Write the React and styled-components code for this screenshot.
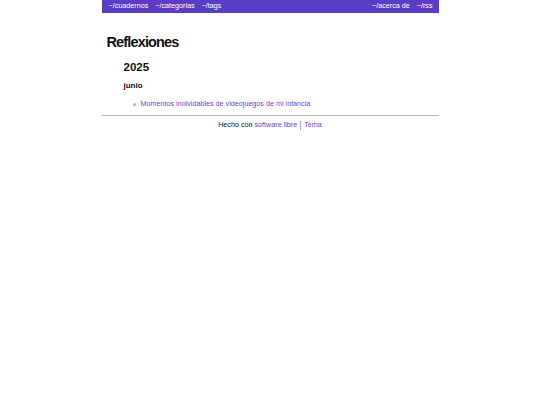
import React from 'react';
import styled, { createGlobalStyle } from 'styled-components';

const GlobalStyle = createGlobalStyle`
  html, body {
    margin: 0;
    padding: 0;
    background: #ffffff;
    font-family: 'Liberation Sans', Arial, sans-serif;
    color: #111111;
  }
`;

const Page = styled.div`
  width: 337px;
  margin: 0 auto;
`;

const NavBar = styled.nav`
  display: flex;
  justify-content: space-between;
  align-items: center;
  height: 12.5px;
  padding: 0 6px 0 7px;
  background: #5b3cc4;
`;

const NavGroup = styled.div`
  display: flex;
  gap: 7px;
`;

const NavLink = styled.a`
  color: #ffffff;
  font-size: 7.2px;
  text-decoration: none;
  line-height: 12px;
`;

const Main = styled.main`
  padding: 20.5px 0 6px 5px;
`;

const Title = styled.h1`
  margin: 0 0 9px;
  font-size: 14.5px;
  font-weight: bold;
  letter-spacing: -0.85px;
  line-height: 18px;
`;

const Year = styled.h2`
  margin: 0 0 7px 17px;
  font-size: 11.5px;
  font-weight: bold;
  line-height: 14px;
`;

const Month = styled.h3`
  margin: 0 0 8px 17px;
  font-size: 8px;
  font-weight: bold;
  line-height: 10px;
`;

const PostList = styled.ul`
  margin: 0;
  padding: 0 0 0 26px;
  list-style: none;
`;

const PostItem = styled.li`
  display: flex;
  align-items: center;
  gap: 5px;
  font-size: 7.2px;
  line-height: 10px;

  &::before {
    content: '';
    width: 3px;
    height: 3px;
    border-radius: 50%;
    background: #b5b0c8;
  }
`;

const PostLink = styled.a`
  color: #6a45d6;
  text-decoration: none;
`;

const Divider = styled.hr`
  margin: 0;
  border: 0;
  border-top: 1px solid #b8b8b8;
`;

const Footer = styled.footer`
  padding: 4px 0;
  text-align: center;
  font-size: 7.2px;
  line-height: 10px;
  color: #111111;
`;

const FooterLink = styled.a`
  color: #6a45d6;
  text-decoration: none;
`;

const Sep = styled.span`
  display: inline-block;
  width: 1px;
  height: 9px;
  margin: 0 3px;
  vertical-align: middle;
  background: #a9a3c9;
`;

export default function App() {
  return (
    <>
      <GlobalStyle />
      <Page>
        <NavBar>
          <NavGroup>
            <NavLink href="#">~/cuadernos</NavLink>
            <NavLink href="#">~/categorias</NavLink>
            <NavLink href="#">~/tags</NavLink>
          </NavGroup>
          <NavGroup>
            <NavLink href="#">~/acerca de</NavLink>
            <NavLink href="#">~/rss</NavLink>
          </NavGroup>
        </NavBar>
        <Main>
          <Title>Reflexiones</Title>
          <Year>2025</Year>
          <Month>junio</Month>
          <PostList>
            <PostItem>
              <PostLink href="#">Momentos inolvidables de videojuegos de mi infancia</PostLink>
            </PostItem>
          </PostList>
        </Main>
        <Divider />
        <Footer>
          Hecho con <FooterLink href="#">software libre</FooterLink>
          <Sep />
          <FooterLink href="#">Tema</FooterLink>
        </Footer>
      </Page>
    </>
  );
}
